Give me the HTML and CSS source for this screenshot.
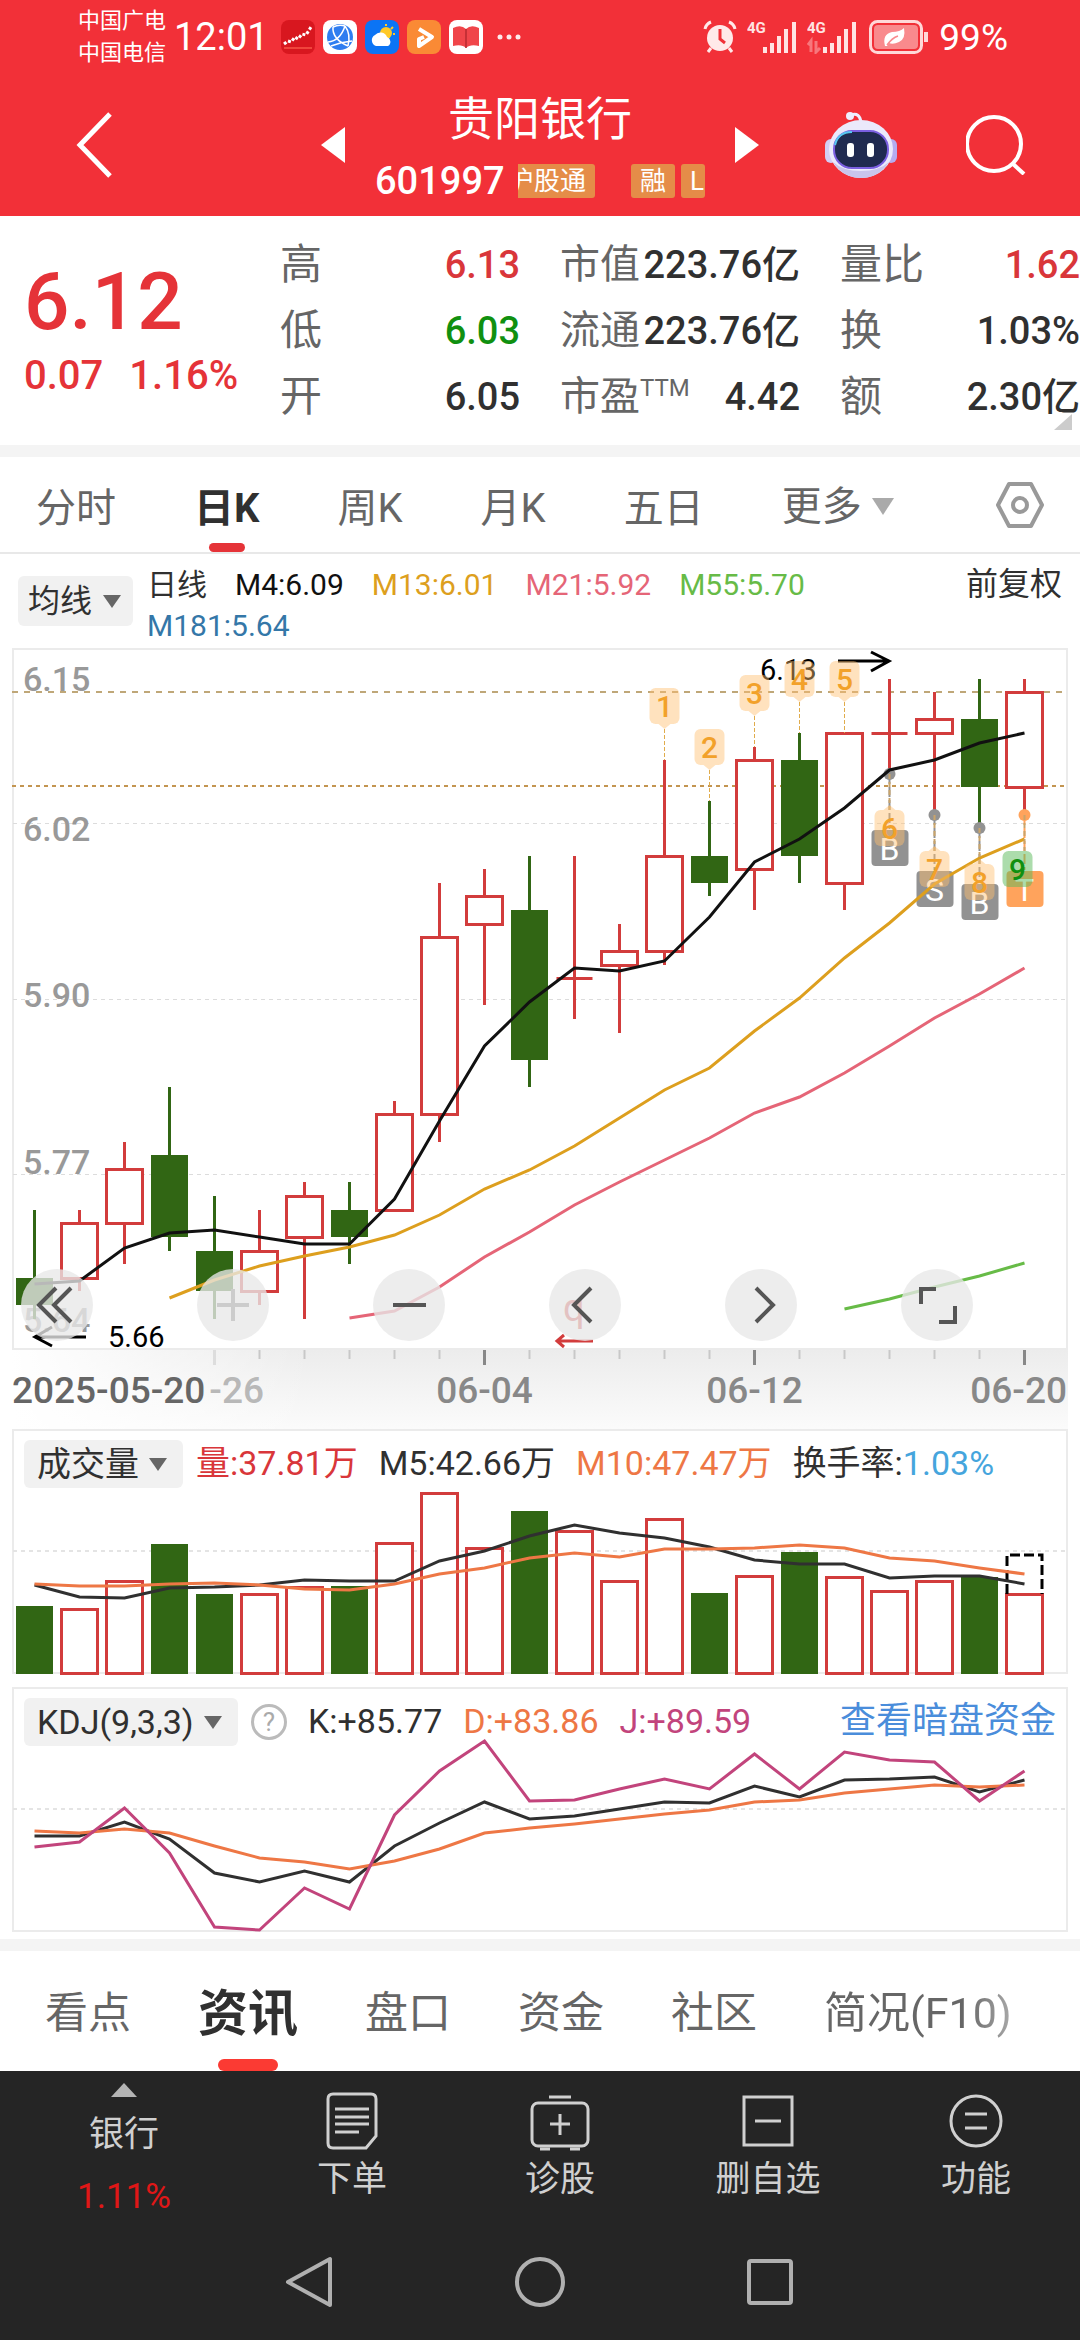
FILE: index.html
```html
<!DOCTYPE html>
<html lang="zh-CN">
  <head>
    <meta charset="UTF-8">
    <meta name="viewport" content="width=device-width, initial-scale=1.0">
    <title>贵阳银行 601997</title>
    <link rel="stylesheet" href="styles.css">
  </head>
  <body>
    <header class="header">
      <div class="status">
        <div class="carriers"><span>中国广电</span><span>中国电信</span></div>
        <span class="clock">12:01</span>
        <div class="apps">
          <svg viewBox="0 0 34 34"><rect width="34" height="34" rx="8" fill="#d8171f"/><path d="M3 24l4-3 3 1 4-5 3 2 4-5 4 1 5-8" fill="none" stroke="#fff" stroke-width="3" stroke-dasharray="3 2"/><path d="M3 28h28" stroke="#f0453c" stroke-width="2"/></svg>
          <svg viewBox="0 0 34 34"><rect width="34" height="34" rx="8" fill="#fff"/><circle cx="17" cy="17" r="13" fill="#2f7df0"/><path d="M10 7q-1 12 15 19M5 22q12-1 17-16M8 26q10-4 21-5M22 6q6 8 3 20M10 7q6-3 12-1" fill="none" stroke="#fff" stroke-width="1.5"/></svg>
          <svg viewBox="0 0 34 34"><rect width="34" height="34" rx="8" fill="#0b74f5"/><circle cx="21" cy="13" r="6" fill="#ffc928"/><path d="M21 4v2M28 7l-2 2M30 14h-2" stroke="#ffc928" stroke-width="2"/><path d="M11 26a6 6 0 0 1-1-11 7 7 0 0 1 12 2 5 5 0 0 1 1 9z" fill="#fff"/></svg>
          <svg viewBox="0 0 34 34"><rect width="34" height="34" rx="8" fill="#fa8a35"/><path d="M12 9l13 8-13 9v-7l5-2" fill="none" stroke="#fff" stroke-width="4" stroke-linejoin="round"/></svg>
          <svg viewBox="0 0 34 34"><rect width="34" height="34" rx="8" fill="#fff"/><path d="M4 8q8-4 13 1 5-5 13-1v18q-9-2-13 2-4-4-13-2z" fill="#f0454a"/><path d="M17 9v19" stroke="#b92a30" stroke-width="1.5"/></svg>
          <svg viewBox="0 0 34 34"><g fill="#fff" opacity=".9"><circle cx="9" cy="17" r="2.5"/><circle cx="18" cy="17" r="2.5"/><circle cx="27" cy="17" r="2.5"/></g></svg>
        </div>
        <div class="signals">
          <svg class="alarm" viewBox="0 0 34 34"><circle cx="17" cy="18" r="13" fill="#ffe9e9"/><path d="M17 9v10l5 4" fill="none" stroke="#f03037" stroke-width="3"/><path d="M2 9q1-5 6-7M32 9q-1-5-6-7M8 28l-3 4M26 28l3 4" fill="none" stroke="#ffe9e9" stroke-width="3"/></svg>
          <svg class="bars" viewBox="0 0 50 34"><text x="0" y="13">4G</text><path d="M18 33v-6M25 33V23M32 33V16M39 33V9M47 33V2"/></svg>
          <svg class="bars" viewBox="0 0 50 34"><text x="0" y="13">4G</text><path d="M18 33v-6M25 33V23M32 33V16M39 33V9M47 33V2"/><path class="faint" d="M4 32V21l-3 4M9 21v11l4-4"/></svg>
          <svg class="battery" viewBox="0 0 60 34"><rect x="1.5" y="1.5" width="51" height="31" rx="7" fill="none" stroke="#ffd8d8" stroke-width="3"/><rect x="5" y="5" width="44" height="24" rx="4" fill="#f98a8d"/><path d="M16 26q-3-12 7-14 8 0 12-4 2 11-5 14-6 3-10 1l-2 3z" fill="#fff"/><path d="M18 25q5-7 11-9" stroke="#f98a8d" stroke-width="1.5" fill="none"/><path d="M57 12v10" stroke="#ffd8d8" stroke-width="4"/></svg>
          <span class="percent">99%</span>
        </div>
      </div>
      <div class="titlebar">
        <button class="back" aria-label="返回"><svg width="38" height="68" viewBox="0 0 38 68"><path d="M34 3L4 34l30 31" fill="none" stroke="#fff" stroke-width="5"/></svg></button>
        <button aria-label="上一只"><svg width="24" height="36" viewBox="0 0 24 36"><path d="M24 0v36L0 18z" fill="#fff"/></svg></button>
        <div class="stock">
          <h1>贵阳银行</h1>
          <div class="code">
            <span>601997</span>
            <div class="tags"><span class="tag first">沪股通</span><span class="tag">融</span><span class="tag">L</span></div>
          </div>
        </div>
        <button aria-label="下一只"><svg width="24" height="36" viewBox="0 0 24 36"><path d="M0 0v36l24-18z" fill="#fff"/></svg></button>
        <button class="robot" aria-label="智能助手">
          <svg width="72" height="68" viewBox="0 0 72 68">
            <path d="M26 4q9-3 10 8" fill="none" stroke="#eef" stroke-width="3"/><circle cx="25" cy="5" r="4" fill="#eef"/>
            <rect x="0" y="28" width="12" height="24" rx="6" fill="#d3cdf5"/><rect x="60" y="28" width="12" height="24" rx="6" fill="#b5acf0"/>
            <ellipse cx="36" cy="38" rx="32" ry="29" fill="#ebe9fb"/>
            <path d="M8 51q10 16 28 16t28-16q-10 9-28 9T8 51z" fill="#c9c5ec"/>
            <rect x="9" y="20" width="54" height="37" rx="18" fill="#202a50" stroke="#7b5fe0" stroke-width="2"/>
            <path d="M10 34q3-13 17-13" fill="none" stroke="#56c8f0" stroke-width="2"/>
            <rect x="22" y="32" width="7" height="14" rx="3" fill="#fff"/><rect x="42" y="32" width="7" height="14" rx="3" fill="#fff"/>
          </svg>
        </button>
        <button aria-label="搜索"><svg width="60" height="60" viewBox="0 0 60 60"><circle cx="28" cy="29" r="27" fill="none" stroke="#fff" stroke-width="4"/><path d="M46 48l12 11" stroke="#fff" stroke-width="4"/></svg></button>
      </div>
    </header>

    <section class="quote">
      <div class="price">
        <strong>6.12</strong>
        <div class="change"><span>0.07</span><span>1.16%</span></div>
      </div>
      <dl>
        <div><dt>高</dt><dd class="up">6.13</dd></div>
        <div><dt>低</dt><dd class="down">6.03</dd></div>
        <div><dt>开</dt><dd>6.05</dd></div>
      </dl>
      <dl class="middle">
        <div><dt>市值</dt><dd>223.76亿</dd></div>
        <div><dt>流通</dt><dd>223.76亿</dd></div>
        <div><dt>市盈<sup>TTM</sup></dt><dd>4.42</dd></div>
      </dl>
      <dl>
        <div><dt>量比</dt><dd class="up">1.62</dd></div>
        <div><dt>换</dt><dd>1.03%</dd></div>
        <div><dt>额</dt><dd>2.30亿</dd></div>
      </dl>
      <i class="corner"></i>
    </section>

    <nav class="periods">
      <button>分时</button>
      <button class="active">日K</button>
      <button>周K</button>
      <button>月K</button>
      <button>五日</button>
      <span class="dropdown more"><select aria-label="更多周期"><option>更多</option></select></span>
      <button class="settings" aria-label="设置"><svg width="48" height="48" viewBox="0 0 48 48" fill="none" stroke="#999" stroke-width="4"><path d="M13 3h22l11 21-11 21H13L2 24z" stroke-linejoin="round"/><circle cx="24" cy="24" r="7"/></svg></button>
    </nav>

    <div class="averages">
      <span class="dropdown pill"><select aria-label="主图指标"><option>均线</option></select></span>
      <div class="legend">
        <span>日线</span>
        <span class="m4">M4:6.09</span>
        <span class="m13">M13:6.01</span>
        <span class="m21">M21:5.92</span>
        <span class="m55">M55:5.70</span>
        <span class="m181">M181:5.64</span>
      </div>
      <button class="adjust">前复权</button>
    </div>

    <section class="chart">
      <svg id="kline" viewBox="0 648 1080 781"></svg>
      <div class="tools">
        <button aria-label="最早"><svg viewBox="0 0 72 72"><path d="M35 19L18 36l17 17M50 19L33 36l17 17"/></svg></button>
        <button class="disabled" aria-label="放大"><svg viewBox="0 0 72 72"><path d="M20 36h32M36 20v32"/></svg></button>
        <button aria-label="缩小"><svg viewBox="0 0 72 72"><path d="M20 36h33"/></svg></button>
        <button aria-label="左移"><svg viewBox="0 0 72 72"><path d="M42 19L25 36l17 17"/></svg></button>
        <button aria-label="右移"><svg viewBox="0 0 72 72"><path d="M31 19l17 17-17 17"/></svg></button>
        <button aria-label="全屏"><svg viewBox="0 0 72 72"><path d="M20 35V20h15M54 37v16H38"/></svg></button>
      </div>
    </section>

    <section class="chart panel">
      <svg id="volume" viewBox="0 1429 1080 246"></svg>
      <div class="indicator">
        <span class="dropdown pill"><select aria-label="副图一"><option>成交量</option></select></span>
        <span class="up">量:37.81万</span>
        <span>M5:42.66万</span>
        <span class="orange">M10:47.47万</span>
        <span>换手率:<b>1.03%</b></span>
      </div>
    </section>

    <section class="chart panel">
      <svg id="kdj" viewBox="0 1687 1080 246"></svg>
      <div class="indicator">
        <span class="dropdown pill"><select aria-label="副图二"><option>KDJ(9,3,3)</option></select></span>
        <button class="help" aria-label="说明">?</button>
        <span>K:+85.77</span>
        <span class="orange">D:+83.86</span>
        <span class="purple">J:+89.59</span>
        <a href="#">查看暗盘资金</a>
      </div>
    </section>

    <nav class="sections">
      <button>看点</button>
      <button class="active">资讯</button>
      <button>盘口</button>
      <button>资金</button>
      <button>社区</button>
      <button class="fade">简况(F10)</button>
    </nav>

    <footer class="bottom">
      <div class="actions">
        <button class="sector"><i class="caret"></i><span>银行</span><span class="rise">1.11%</span></button>
        <button><svg viewBox="0 0 60 60"><path d="M11 3h38q5 0 5 5v37l-10 12H11q-5 0-5-5V8q0-5 5-5z"/><path d="M13 18h34M13 26h34M13 33h34M13 41h24"/></svg>下单</button>
        <button><svg viewBox="0 0 60 60"><rect x="2" y="12" width="56" height="43" rx="6"/><path d="M19 6h22M30 23v21M20 33h20M10 58h10M40 58h10"/></svg>诊股</button>
        <button><svg viewBox="0 0 60 60"><rect x="6" y="6" width="48" height="48"/><path d="M17 30h26"/></svg>删自选</button>
        <button><svg viewBox="0 0 60 60"><circle cx="30" cy="30" r="25"/><path d="M19 23h22M19 37h22"/></svg>功能</button>
      </div>
      <div class="system">
        <button aria-label="返回"><svg width="52" height="52" viewBox="0 0 52 52"><path d="M46 3v46L4 26z"/></svg></button>
        <button aria-label="主页"><svg width="52" height="52" viewBox="0 0 52 52"><circle cx="26" cy="26" r="23"/></svg></button>
        <button aria-label="最近任务"><svg width="52" height="52" viewBox="0 0 52 52"><rect x="5" y="5" width="42" height="42" rx="2"/></svg></button>
      </div>
    </footer>

    <script src="chart.js"></script>
  </body>
</html>
```

FILE: styles.css
```css
* {
  box-sizing: border-box;
}
body {
  margin: 0;
  min-height: 100vh;
  display: flex;
  flex-direction: column;
  background: #fff;
  color: #303030;
  font-family: Roboto, "Noto Sans CJK SC", sans-serif;
}
button, select {
  margin: 0;
  padding: 0;
  border: 0;
  background: none;
  color: inherit;
  font: inherit;
  white-space: nowrap;
}
select {
  appearance: none;
}
svg {
  display: block;
}
h1, dl, dd {
  margin: 0;
}
.up { color: #d9363a; }
.down { color: #109010; }
.orange { color: #ee7745; }
.purple { color: #c2447c; }

/* header */
.header {
  height: 216px;
  background: #f23038;
  color: #fff;
}
.status {
  display: flex;
  align-items: center;
  height: 74px;
  padding: 0 72px 0 78px;
}
.carriers {
  display: flex;
  flex-direction: column;
  font-size: 22px;
  line-height: 32px;
}
.clock {
  margin-left: 8px;
  font-size: 38px;
}
.apps {
  display: flex;
  gap: 8px;
  margin-left: 12px;
}
.apps svg, .alarm {
  width: 34px;
  height: 34px;
}
.signals {
  display: flex;
  align-items: center;
  margin-left: auto;
}
.bars {
  width: 50px;
  height: 34px;
  margin-left: 10px;
  fill: none;
  stroke: #ffe3e3;
  stroke-width: 4;
}
.bars text {
  fill: #ffe3e3;
  stroke: none;
  font-size: 15px;
  font-weight: 700;
}
.bars .faint {
  opacity: .4;
  stroke-width: 3;
}
.battery {
  width: 60px;
  height: 34px;
  margin: 0 10px 0 12px;
}
.percent {
  font-size: 37px;
}
.titlebar {
  display: flex;
  align-items: center;
  height: 142px;
  padding: 0 54px 0 76px;
}
.titlebar .back {
  margin-right: auto;
}
.stock {
  width: 330px;
  margin: 0 30px;
  padding-top: 8px;
}
.stock h1 {
  font-size: 46px;
  font-weight: 400;
  line-height: 64px;
  text-align: center;
}
.code {
  display: flex;
  align-items: center;
  justify-content: space-between;
  height: 60px;
  font-size: 38px;
  font-weight: 500;
}
.tags {
  display: flex;
  justify-content: flex-end;
  gap: 6px;
  width: 187px;
  overflow: hidden;
}
.tag {
  flex: none;
  padding: 0 9px;
  border-radius: 3px;
  background: #e58c48;
  font-size: 26px;
  font-weight: 400;
  line-height: 34px;
}
.tag.first {
  margin-right: 30px;
}
.tag:last-child {
  width: 24px;
}
.robot {
  margin: 0 69px 0 66px;
}

/* quote */
.quote {
  position: relative;
  display: grid;
  grid-template-columns: 216px 240px 240px 1fr;
  column-gap: 40px;
  padding: 16px 0 15px 24px;
  border-bottom: 12px solid #f4f4f4;
}
.price {
  color: #e53338;
}
.price strong {
  display: block;
  padding-top: 22px;
  font-size: 80px;
  font-weight: 500;
  line-height: 96px;
}
.change {
  display: flex;
  gap: 26px;
  font-size: 40px;
  font-weight: 500;
  line-height: 52px;
}
.quote dl div {
  display: flex;
  justify-content: space-between;
  align-items: center;
  height: 66px;
  line-height: 64px;
}
.quote dt {
  color: #666;
  font-size: 42px;
  white-space: nowrap;
}
.quote .middle dt {
  font-size: 40px;
}
.quote dd {
  font-size: 38px;
  font-weight: 500;
  white-space: nowrap;
}
.quote sup {
  font-size: 24px;
  line-height: 0;
}
.corner {
  position: absolute;
  right: 8px;
  bottom: 15px;
  border-left: 18px solid transparent;
  border-bottom: 16px solid #ccc;
}

/* period tabs */
.periods {
  display: flex;
  align-items: center;
  gap: 78px;
  height: 97px;
  padding: 0 36px;
  border-bottom: 2px solid #e8e8e8;
  color: #666;
  font-size: 40px;
}
.periods button, .sections button {
  position: relative;
  height: 100%;
}
.periods .settings {
  margin-left: auto;
}
.periods .active, .sections .active {
  color: #303030;
  font-weight: 700;
}
.active::after {
  content: "";
  position: absolute;
  left: 50%;
  bottom: 0;
  width: 36px;
  height: 9px;
  margin-left: -18px;
  border-radius: 5px;
  background: #e53338;
}
.dropdown {
  display: inline-flex;
  align-items: center;
  gap: 10px;
}
.dropdown::after {
  content: "";
  border: 9px solid transparent;
  border-top: 13px solid #666;
  border-bottom: 0;
}
.more {
  padding-top: 4px;
}
.more::after {
  border-width: 17px 11px 0;
  border-top-color: #aaa;
}
.pill {
  border-radius: 6px;
  background: #f1f1f1;
}

/* averages legend */
.averages {
  display: flex;
  align-items: flex-start;
  height: 94px;
  padding: 10px 18px;
  font-size: 32px;
}
.averages .pill {
  height: 50px;
  margin-top: 12px;
  padding: 0 12px 0 10px;
}
.legend {
  display: flex;
  flex: 1;
  flex-wrap: wrap;
  column-gap: 28px;
  margin-left: 14px;
  font-size: 30px;
  line-height: 41px;
}
.m4 { color: #111; }
.m13 { color: #dd9f1e; }
.m21 { color: #e56577; }
.m55 { color: #67bb47; }
.m181 { color: #3477a8; }
.adjust {
  line-height: 40px;
}

/* charts */
.chart {
  position: relative;
}
.chart > svg {
  width: 100%;
}
.chart text {
  font-size: 34px;
}
.panel {
  margin-bottom: 12px;
}
.panel + .sections {
  margin-top: -6px;
}
.tools {
  position: absolute;
  top: 79.5%;
  left: 21px;
  right: 107px;
  display: flex;
  justify-content: space-between;
}
.tools button {
  width: 72px;
  height: 72px;
  border-radius: 50%;
  background: rgba(232, 232, 232, .78);
}
.tools path {
  fill: none;
  stroke: #555;
  stroke-width: 4;
}
.tools .disabled path {
  stroke: #ccc;
}
.indicator {
  position: absolute;
  top: 11px;
  left: 24px;
  right: 24px;
  display: flex;
  align-items: center;
  gap: 21px;
  height: 48px;
  font-size: 34px;
  line-height: 46px;
  white-space: nowrap;
}
.indicator > span:not(.pill), .indicator a {
  padding-bottom: 2px;
}
.indicator .pill {
  height: 48px;
  margin-right: -8px;
  padding: 0 16px 0 13px;
}
.indicator b {
  color: #45a5dd;
  font-weight: 400;
}
.indicator a {
  margin-left: auto;
  color: #4a8ddb;
  font-size: 36px;
  text-decoration: none;
}
.help {
  width: 36px;
  height: 36px;
  border: 3px solid #bbb;
  border-radius: 50%;
  color: #aaa;
  font-size: 26px;
  line-height: 30px;
}

/* section tabs */
.sections {
  display: flex;
  align-items: center;
  gap: 67px;
  height: 132px;
  padding: 0 45px;
  border-top: 12px solid #f4f4f4;
  color: #666;
  font-size: 43px;
}
.sections button {
  padding-bottom: 4px;
}
.sections .active {
  font-size: 50px;
}
.sections .active::after {
  width: 60px;
  height: 12px;
  margin-left: -30px;
  border-radius: 6px;
  background: #fb3a33;
}
.fade {
  background: linear-gradient(90deg, #666 75%, #aaa);
  background-clip: text;
  color: transparent;
}

/* bottom bars */
.bottom {
  flex: 1;
  background: #252525;
  color: #d0d0d0;
}
.actions {
  display: grid;
  grid-template-columns: 248px repeat(4, 1fr);
  height: 154px;
  font-size: 35px;
}
.actions button {
  display: flex;
  flex-direction: column;
  align-items: center;
  padding-top: 20px;
  line-height: 58px;
}
.actions svg {
  width: 60px;
  height: 60px;
  fill: none;
  stroke: #d0d0d0;
  stroke-width: 3;
}
.actions .sector {
  padding-top: 12px;
  line-height: 62px;
}
.caret {
  margin-bottom: 7px;
  border: 13px solid transparent;
  border-bottom: 14px solid #b4b4b4;
  border-top: 0;
}
.rise {
  color: #e01717;
}
.system {
  display: flex;
  justify-content: center;
  gap: 178px;
  padding-top: 31px;
}
.system svg {
  fill: none;
  stroke: #b0b0b0;
  stroke-width: 4;
  stroke-linejoin: round;
}
```

FILE: chart.js
```js
const RED = '#d23c3c';
const GREEN = '#316614';
const STEP = 45;
const BAR = 36;

// [open, high, low, close]
const candles = [
  [5.69, 5.74, 5.66, 5.67], [5.69, 5.74, 5.68, 5.73], [5.73, 5.79, 5.70, 5.77],
  [5.78, 5.83, 5.71, 5.72], [5.71, 5.75, 5.66, 5.68], [5.68, 5.74, 5.67, 5.71],
  [5.72, 5.76, 5.66, 5.75], [5.74, 5.76, 5.70, 5.72], [5.74, 5.82, 5.74, 5.81],
  [5.81, 5.98, 5.79, 5.94], [5.95, 5.99, 5.89, 5.97], [5.96, 6.00, 5.83, 5.85],
  [5.91, 6.00, 5.88, 5.91], [5.92, 5.95, 5.87, 5.93], [5.93, 6.07, 5.92, 6.00],
  [6.00, 6.04, 5.97, 5.98], [5.99, 6.08, 5.96, 6.07], [6.07, 6.09, 5.98, 6.00],
  [5.98, 6.09, 5.96, 6.09], [6.09, 6.13, 6.06, 6.09], [6.09, 6.12, 6.03, 6.10],
  [6.10, 6.13, 6.02, 6.05], [6.05, 6.13, 6.03, 6.12],
];

const x = i => 34.5 + i * STEP;
const y = price => Math.floor(679 + (6.13 - price) * 1362);
const falling = c => c[3] < c[0];

const line = (x1, y1, x2, y2, color, width = 3, dash = '') =>
  `<path d="M${x1} ${y1}L${x2} ${y2}" stroke="${color}" stroke-width="${width}" stroke-dasharray="${dash}"/>`;
const text = (px, py, str, color, extra = '') =>
  `<text x="${px}" y="${py}" fill="${color}" ${extra}>${str}</text>`;
const curve = (start, ys, color) =>
  `<polyline points="${ys.map((v, i) => x(start + i) + ',' + v).join(' ')}" fill="none" stroke="${color}" stroke-width="3"/>`;
const frame = (top, height) =>
  `<rect x="13" y="${top}" width="1054" height="${height}" fill="none" stroke="#ebebeb" stroke-width="2"/>`;

function body(i, top, bottom, down, stroke = 3) {
  if (down) {
    return `<rect x="${x(i) - 18.5}" y="${top}" width="37" height="${bottom - top}" fill="${GREEN}"/>`;
  }
  return `<rect x="${x(i) - BAR / 2}" y="${top + 0.5}" width="${BAR}" height="${bottom - top}" fill="#fff" stroke="${RED}" stroke-width="${stroke}"/>`;
}

function drawKline() {
  let out = `<defs>
    <linearGradient id="fall" x1="0" y1="0" x2="0" y2="1"><stop offset="0" stop-color="#ececec"/><stop offset="1" stop-color="#fbfbfb"/></linearGradient>
    <linearGradient id="veil"><stop offset="0" stop-color="#fff"/><stop offset="1" stop-color="#fff" stop-opacity="0"/></linearGradient>
  </defs>
  <rect x="12" y="1350" width="1056" height="79" fill="url(#fall)"/>
  <rect x="12" y="1350" width="300" height="79" fill="url(#veil)"/>`;
  out += frame(649, 700);
  [823.5, 999.5, 1174.5].forEach(v => out += line(13, v, 1067, v, '#dcdcdc', 1, '4 4'));
  out += line(12, 692, 1067, 692, '#bfa778', 2, '6 6');
  out += line(12, 786, 1067, 786, '#c39551', 2, '4 4');
  [[691, '6.15'], [841, '6.02'], [1007, '5.90'], [1174, '5.77'], [1332, '5.64']]
    .forEach(([v, s]) => out += text(23, v, s, '#999', 'font-weight="500"'));

  candles.forEach((c, i) => {
    const color = falling(c) ? GREEN : RED;
    out += line(x(i), y(c[1]), x(i), y(c[2]), color);
    const top = y(Math.max(c[0], c[3]));
    const bottom = y(Math.min(c[0], c[3]));
    out += top === bottom
      ? line(x(i) - 18, top + 0.5, x(i) + 18, top + 0.5, color)
      : body(i, top, bottom, falling(c));
  });

  // sell / buy / T marks under the last four candles
  [['B', 19], ['S', 20], ['B', 21], ['T', 22]].forEach(([s, i]) => {
    const d = y(candles[i][2]);
    const color = s === 'T' ? '#ffa35c' : '#929292';
    out += `<circle cx="${x(i)}" cy="${d}" r="6" fill="${color}"/>`;
    out += line(x(i), d, x(i), d + 55, color, 2, '10 3');
    out += `<rect x="${x(i) - 18}" y="${d + 56}" width="37" height="36" rx="4" fill="${color}"/>`;
    out += text(x(i), d + 86, s, '#fff', 'text-anchor="middle" style="font-size:32px"');
  });

  out += curve(3, [1298, 1280, 1266, 1256, 1247, 1235, 1215, 1189, 1170, 1146, 1118, 1090, 1068, 1031, 998, 958, 923, 884, 858, 839], '#dd9f1e');
  out += curve(7, [1318, 1311, 1287, 1257, 1232, 1205, 1182, 1160, 1138, 1113, 1097, 1073, 1046, 1018, 994, 968], '#e56577');
  out += curve(18, [1309, 1299, 1287, 1276, 1263], '#67bb47');
  out += curve(0, [1284, 1281, 1248, 1233, 1230, 1237, 1244, 1244, 1199, 1121, 1046, 1002, 968, 971, 961, 917, 862, 839, 808, 770, 760, 743, 733], '#111');

  out += text(760, 680, '6.13', '#000', 'style="font-size:29px"');
  out += '<path d="M838 661h51M871 652l18 9-18 10" fill="none" stroke="#000" stroke-width="3"/>';
  out += text(108, 1347, '5.66', '#000', 'style="font-size:29px"');
  out += '<path d="M86 1337H35M52 1327l-17 10 17 9" fill="none" stroke="#000" stroke-width="3"/>';
  out += text(563, 1321, 'q', RED, 'style="font-size:38px"');
  out += `<path d="M593 1341h-35M564 1335l-7 6 7 6" fill="none" stroke="${RED}" stroke-width="3"/>`;

  // nine-turn counter
  for (let n = 1; n <= 9; n++) {
    const i = 13 + n;
    const above = n < 6;
    const cx = x(i) - (n === 9 ? 7 : 0);
    const edge = above ? y(candles[i][1]) : y(candles[i][2]);
    const top = above ? edge - 72 : edge + 36;
    const fill = n === 9 ? 'rgba(90,185,90,.5)' : 'rgba(255,190,110,.45)';
    const color = n === 9 ? '#109010' : '#f2a12a';
    const tip = above
      ? `M${cx - 6} ${top + 36}h12l-6 5z`
      : `M${cx - 6} ${top}h12l-6-5z`;
    out += above
      ? line(x(i), top + 41, x(i), edge, '#e0ac4c', 1, '4 2')
      : line(x(i), edge, x(i), top, '#c9a46a', 2, '5 3');
    out += `<rect x="${cx - 15}" y="${top}" width="30" height="36" rx="6" fill="${fill}"/>`;
    if (n !== 9) out += `<path d="${tip}" fill="${fill}"/>`;
    out += text(cx, top + 29, n, color, 'text-anchor="middle" font-weight="500" style="font-size:30px"');
  }

  for (let i = 4; i < 23; i++) {
    const major = (i - 4) % 6 === 0;
    out += line(x(i), 1350, x(i), major ? 1365 : 1359, i === 4 ? '#ddd' : major ? '#888' : '#c8c8c8', major ? 3 : 2);
  }
  const date = (px, s, anchor, color) =>
    text(px, 1403, s, color, `text-anchor="${anchor}" font-weight="500" style="font-size:37px"`);
  out += date(12, '2025-05-20', 'start', '#666');
  out += date(264, '-26', 'end', '#b8b8b8');
  out += date(x(10), '06-04', 'middle', '#888');
  out += date(x(16), '06-12', 'middle', '#888');
  out += date(1067, '06-20', 'end', '#888');
  document.getElementById('kline').innerHTML = out;
}

function drawVolume() {
  const tops = [1606, 1609, 1581, 1544, 1594, 1594, 1587, 1586, 1543, 1493, 1548, 1511, 1531, 1581, 1519, 1593, 1576, 1552, 1577, 1591, 1581, 1577, 1594];
  let out = frame(1430, 243) + line(13, 1551, 1067, 1551, '#e4e4e4', 2, '4 4');
  tops.forEach((top, i) => out += body(i, top, falling(candles[i]) ? 1674 : 1673, falling(candles[i])));
  out += '<path d="M1007 1594v-39h35v39" fill="none" stroke="#000" stroke-width="3" stroke-dasharray="10 4"/>';
  out += curve(0, [1585, 1597, 1598, 1588, 1587, 1585, 1580, 1581, 1581, 1561, 1551, 1536, 1525, 1533, 1538, 1547, 1560, 1564, 1564, 1578, 1576, 1576, 1584], '#303030');
  out += curve(0, [1584, 1586, 1586, 1584, 1583, 1585, 1589, 1590, 1584, 1574, 1568, 1558, 1553, 1557, 1549, 1549, 1548, 1545, 1548, 1558, 1561, 1568, 1574], '#ee7745');
  document.getElementById('volume').innerHTML = out;
}

function drawKdj() {
  let out = frame(1688, 243) + line(13, 1809, 1067, 1809, '#e4e4e4', 2, '4 4');
  out += curve(0, [1836, 1836, 1822, 1839, 1873, 1882, 1871, 1882, 1846, 1823, 1802, 1819, 1816, 1809, 1802, 1803, 1786, 1797, 1780, 1779, 1777, 1792, 1780], '#303030');
  out += curve(0, [1831, 1833, 1829, 1833, 1846, 1858, 1862, 1869, 1861, 1849, 1833, 1828, 1824, 1819, 1814, 1810, 1802, 1800, 1793, 1789, 1785, 1787, 1785], '#ee7745');
  out += curve(0, [1847, 1842, 1808, 1853, 1927, 1930, 1888, 1909, 1815, 1771, 1741, 1801, 1800, 1789, 1779, 1789, 1754, 1789, 1752, 1760, 1762, 1801, 1771], '#c2447c');
  document.getElementById('kdj').innerHTML = out;
}

drawKline();
drawVolume();
drawKdj();
```
